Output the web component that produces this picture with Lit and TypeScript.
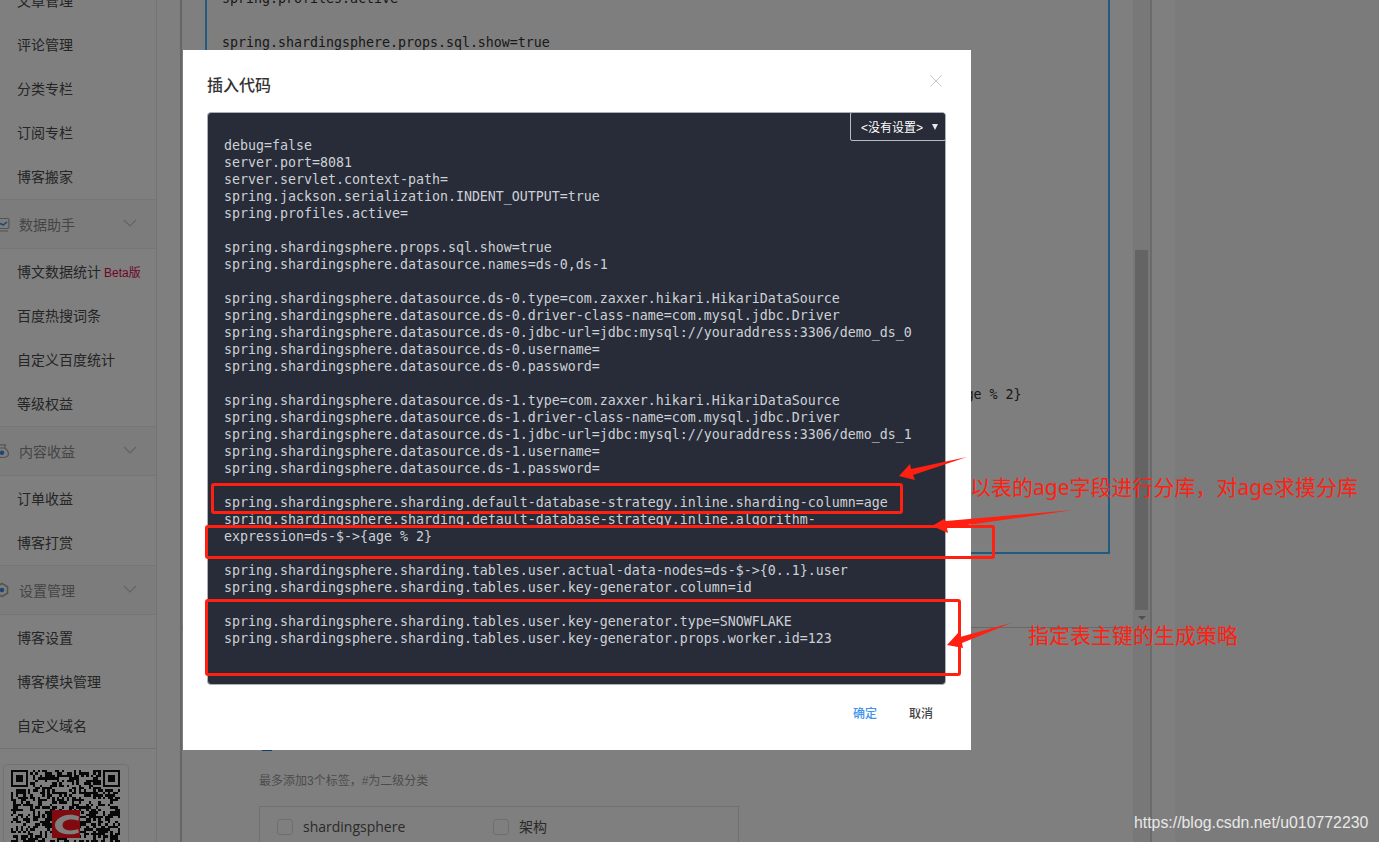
import { LitElement, html, css, svg } from "lit";
import { customElement } from "lit/decorators.js";

const CODE = `debug=false
server.port=8081
server.servlet.context-path=
spring.jackson.serialization.INDENT_OUTPUT=true
spring.profiles.active=

spring.shardingsphere.props.sql.show=true
spring.shardingsphere.datasource.names=ds-0,ds-1

spring.shardingsphere.datasource.ds-0.type=com.zaxxer.hikari.HikariDataSource
spring.shardingsphere.datasource.ds-0.driver-class-name=com.mysql.jdbc.Driver
spring.shardingsphere.datasource.ds-0.jdbc-url=jdbc:mysql://youraddress:3306/demo_ds_0
spring.shardingsphere.datasource.ds-0.username=
spring.shardingsphere.datasource.ds-0.password=

spring.shardingsphere.datasource.ds-1.type=com.zaxxer.hikari.HikariDataSource
spring.shardingsphere.datasource.ds-1.driver-class-name=com.mysql.jdbc.Driver
spring.shardingsphere.datasource.ds-1.jdbc-url=jdbc:mysql://youraddress:3306/demo_ds_1
spring.shardingsphere.datasource.ds-1.username=
spring.shardingsphere.datasource.ds-1.password=

spring.shardingsphere.sharding.default-database-strategy.inline.sharding-column=age
spring.shardingsphere.sharding.default-database-strategy.inline.algorithm-
expression=ds-$->{age % 2}

spring.shardingsphere.sharding.tables.user.actual-data-nodes=ds-$->{0..1}.user
spring.shardingsphere.sharding.tables.user.key-generator.column=id

spring.shardingsphere.sharding.tables.user.key-generator.type=SNOWFLAKE
spring.shardingsphere.sharding.tables.user.key-generator.props.worker.id=123`;

const BG_CODE = `spring.profiles.active

spring.shardingsphere.props.sql.show=true
spring.shardingsphere.datasource.names=ds-0,ds-1

spring.shardingsphere.datasource.ds-0.type=com.zaxxer.hikari.HikariDataSource
spring.shardingsphere.datasource.ds-0.driver-class-name=com.mysql.jdbc.Driver
spring.shardingsphere.datasource.ds-0.jdbc-url=jdbc:mysql://youraddress:3306/demo_ds_0
spring.shardingsphere.datasource.ds-0.username=
spring.shardingsphere.datasource.ds-0.password=

spring.shardingsphere.datasource.ds-1.type=com.zaxxer.hikari.HikariDataSource
spring.shardingsphere.datasource.ds-1.driver-class-name=com.mysql.jdbc.Driver
spring.shardingsphere.datasource.ds-1.jdbc-url=jdbc:mysql://youraddress:3306/demo_ds_1
spring.shardingsphere.datasource.ds-1.username=
spring.shardingsphere.datasource.ds-1.password=

spring.shardingsphere.sharding.default-database-strategy.inline.sharding-column=age
spring.shardingsphere.sharding.default-database-strategy.inline.algorithm-expression=ds-$->{age % 2}`;

function qrCells() {
  const n = 45;
  let seed = 20190612;
  const rnd = () => {
    seed = (seed * 1103515245 + 12345) & 0x7fffffff;
    return (seed >> 12) % 100;
  };
  const out: any[] = [];
  const inFinder = (x: number, y: number) =>
    (x < 8 && y < 8) || (x >= n - 8 && y < 8) || (x < 8 && y >= n - 8);
  for (let y = 0; y < n; y++) {
    for (let x = 0; x < n; x++) {
      if (inFinder(x, y)) continue;
      if (rnd() < 50) out.push(svg`<rect x=${x} y=${y} width="1" height="1"></rect>`);
    }
  }
  const finder = (x: number, y: number) => svg`
    <rect x=${x} y=${y} width="7" height="7"></rect>
    <rect x=${x + 1} y=${y + 1} width="5" height="5" fill="#fff"></rect>
    <rect x=${x + 2} y=${y + 2} width="3" height="3"></rect>`;
  out.push(finder(0, 0), finder(n - 7, 0), finder(0, n - 7));
  return out;
}

@customElement("app-root")
export class AppRoot extends LitElement {
  static styles = css`
    :host { display: block; width: 1379px; height: 842px; position: relative; overflow: hidden;
      background: #f6f6f6; font-family: "Liberation Sans", "Noto Sans CJK SC", sans-serif; }
    .page { display: flex; height: 842px; overflow: hidden; }

    .sidebar { width: 156px; flex: none; background: #fff; border-right: 1px solid #e8e8e8; margin-top: -21px; height: 863px; overflow: hidden; }
    .row { height: 44px; box-sizing: border-box; padding: 0 0 2px 17px; display: flex; align-items: center; font-size: 14px; color: #4a4a4a; white-space: nowrap; }
    .beta { font-size: 12px; color: #d80c4c; margin-left: 3px; }
    .sec { height: 48px; margin-bottom: 1px; display: flex; align-items: center; background: #f8f8f8;
      border-top: 1px solid #ececec; border-bottom: 1px solid #ececec; font-size: 14px; color: #8a8a8a; position: relative; padding-left: 19px; }
    .sec .ico { position: absolute; left: -6px; top: 16px; }
    .sec .chev { position: absolute; left: 123px; top: 19px; }
    .foot { border-top: 1px solid #e4e4e4; padding: 15px 0 0 3px; }
    .qrcard { width: 126px; height: 140px; border: 1px solid #e4e4e4; border-radius: 4px; padding: 5px 7px; box-sizing: border-box; background: #fff; position: relative; }
    .qrcard svg { display: block; }
    .qrlogo { position: absolute; left: 48px; top: 45px; }

    .gutter { width: 23px; flex: none; background: #fff; border-right: 2px solid #cdcdcd; }
    .content { width: 951px; flex: none; background: #fff; position: relative; overflow: hidden; }
    .editor { width: 905px; box-sizing: border-box; height: 554px; margin-left: 23px; border: 2px solid #46b4ff; border-top: 0; background: #fff; padding-right: 8px; }
    .editor-inner { height: 545px; background: #fcfcfc; overflow: visible; }
    .bgcode { margin: 0; padding: 0 0 0 15px; font: 13.29px/22px "DejaVu Sans Mono", monospace; color: #333; white-space: pre; transform: translateY(-12px); }
    .rule { height: 1px; background: #d0d0d0; margin-top: 73px; }
    .blue { width: 10px; height: 4px; background: #1a78d0; margin: 119px 0 0 80px; }
    .tip { font-size: 12px; line-height: 16px; color: #999; margin: 22px 0 0 77px; }
    .tags { width: 480px; height: 60px; box-sizing: border-box; margin: 17px 0 0 77px; border: 1px solid #e3e3e3; display: flex; align-items: flex-start; padding: 12px 0 0 17px; font-size: 14px; color: #555; font-family: "Open Sans", "Noto Sans CJK SC", sans-serif; }
    .tag { display: flex; align-items: center; gap: 10px; width: 216px; line-height: 16px; }
    .box { width: 14px; height: 14px; border: 1px solid #ddd; border-radius: 3px; flex: none; }

    .bar { flex: none; background: #f1f1f1; border-right: 2px solid #d4d4d4; padding: 0 2px; width: 13px; }
    .thumb { margin-top: 250px; height: 360px; background: #c8c8c8; width: 13px; }
    .arrow { margin: 6px 0 0 3px; width: 0; height: 0; border: 4px solid transparent; border-top: 4px solid #a0a0a0; border-bottom: 0; }
    .pad { width: 23px; flex: none; background: #fff; }

    .overlay { position: absolute; inset: 0; background: rgba(0, 0, 0, 0.5); }

    .modal { position: absolute; left: 183px; top: 50px; width: 788px; height: 700px; background: #fff; box-sizing: border-box; padding: 25px 25px 0 24px; display: flex; flex-direction: column; }
    .title { font-size: 16px; font-weight: 500; line-height: 22px; color: #333; }
    .close { position: absolute; left: 746px; top: 24px; }
    .codebox { margin-top: 15px; height: 573px; width: 739px; box-sizing: border-box; background: #282c38; border-radius: 4px; border: 1px solid #aab0b8; position: relative; overflow: hidden; }
    .code { margin: 0; padding: 24px 0 0 16px; font: 13.29px/17px "DejaVu Sans Mono", monospace; color: #cdd0d6; white-space: pre; }
    .select { position: absolute; right: -1px; top: -1px; width: 96px; height: 29px; box-sizing: border-box; border: 1px solid #b6bbc0; border-radius: 2px; display: flex; align-items: center; padding-left: 10px; font-size: 12px; color: #fff; background: #282c38; }
    .caret { margin-left: 9px; width: 0; height: 0; border-left: 3px solid transparent; border-right: 3px solid transparent; border-top: 6px solid #e8e8e8; }
    .actions { display: flex; justify-content: flex-end; gap: 32px; margin-top: 20px; padding-right: 13px; font-size: 12px; font-weight: 500; line-height: 18px; }
    .ok { color: #3d94ea; }
    .cancel { color: #444; }

    .rb { position: absolute; border: 3px solid #ff2012; border-radius: 3px; box-sizing: border-box; }
    .rb1 { left: 211px; top: 483px; width: 692px; height: 31px; }
    .rb2 { left: 205px; top: 525px; width: 790px; height: 34px; }
    .rb3 { left: 205px; top: 599px; width: 756px; height: 77px; }
    .arrows { position: absolute; left: 0; top: 0; }
    .note { position: absolute; color: #ff2012; font-size: 21px; line-height: 28px; white-space: nowrap; font-family: "Noto Sans", "Noto Sans CJK SC", sans-serif; font-weight: 400; }
    .n1 { left: 970px; top: 473px; }
    .n2 { left: 1028px; top: 621px; }
    .mark { position: absolute; left: 1134px; top: 813px; font-size: 15.85px; line-height: 20px; color: #e8e8e8; white-space: nowrap; }
  `;

  private sideRow(t: string) {
    return html`<div class="row">${t}</div>`;
  }

  render() {
    return html`
      <div class="page">
        <nav class="sidebar">
          ${["文章管理", "评论管理", "分类专栏", "订阅专栏", "博客搬家"].map((t) => this.sideRow(t))}
          <div class="sec">
            <svg class="ico" width="16" height="17" viewBox="0 0 16 17" fill="none" stroke="#a8a8a8" stroke-width="1.2"><rect x="1" y="2.500" width="14" height="10" rx="1.5"></rect><path d="M4 9.500l3-2 2 1.500 4-3" stroke="#3f88e0" stroke-width="1.4"></path><path d="M2 15h12" stroke="#b0b0b0"></path></svg>
            数据助手
            <svg class="chev" width="14" height="8" viewBox="0 0 14 8" fill="none" stroke="#c4c4c4" stroke-width="1.2"><path d="M1 1l6 6 6-6"></path></svg>
          </div>
          <div class="row">博文数据统计<span class="beta">Beta版</span></div>
          ${["百度热搜词条", "自定义百度统计", "等级权益"].map((t) => this.sideRow(t))}
          <div class="sec">
            <svg class="ico" width="16" height="16" viewBox="0 0 16 16" fill="none" stroke="#a8a8a8" stroke-width="1.2"><path d="M5.500 5L4.500 1.800h7L10.500 5"></path><path d="M5.500 5C3 6.500 1.500 9 1.500 11c0 2.500 2 3.500 6.500 3.500s6.500-1 6.500-3.500c0-2-1.500-4.500-4-6z"></path><circle cx="8" cy="9.800" r="2.200" fill="#3f88e0" stroke="none"></circle></svg>
            内容收益
            <svg class="chev" width="14" height="8" viewBox="0 0 14 8" fill="none" stroke="#c4c4c4" stroke-width="1.2"><path d="M1 1l6 6 6-6"></path></svg>
          </div>
          ${["订单收益", "博客打赏"].map((t) => this.sideRow(t))}
          <div class="sec">
            <svg class="ico" width="16" height="16" viewBox="0 0 16 16" fill="none" stroke="#a8a8a8" stroke-width="1.6"><path d="M8 1.500l5.500 3.200v6.600L8 14.500l-5.500-3.200V4.700z"></path><circle cx="8" cy="8" r="2.200" fill="#3f88e0" stroke="none"></circle></svg>
            设置管理
            <svg class="chev" width="14" height="8" viewBox="0 0 14 8" fill="none" stroke="#c4c4c4" stroke-width="1.2"><path d="M1 1l6 6 6-6"></path></svg>
          </div>
          ${["博客设置", "博客模块管理", "自定义域名"].map((t) => this.sideRow(t))}
          <div class="foot">
            <div class="qrcard">
              <svg width="109" height="109" viewBox="0 0 45 45" fill="#111" shape-rendering="crispEdges">${qrCells()}</svg>
              <svg class="qrlogo" width="28" height="28" viewBox="0 0 28 28"><rect width="28" height="28" fill="#ff1420"></rect><path d="M27 6.500C22 4.500 16 4 11 6 5.500 8.500 3 11.500 3 15c0 4.500 4 8 10 9 5 .7 10 .3 14-1.500l-1-3.500c-4 1.500-8 1.800-11 1-3-.8-4.500-2.300-4.500-5 0-2.500 2-4.200 5-5 3.500-.8 7-.5 11 .8z" fill="#fff"></path></svg>
            </div>
          </div>
        </nav>
        <div class="gutter"></div>
        <main class="content">
          <div class="editor">
            <div class="editor-inner"><pre class="bgcode">${BG_CODE}</pre></div>
          </div>
          <div class="rule"></div>
          <div class="blue"></div>
          <div class="tip">最多添加3个标签，#为二级分类</div>
          <div class="tags">
            <div class="tag"><span class="box"></span>shardingsphere</div>
            <div class="tag"><span class="box"></span>架构</div>
          </div>
        </main>
        <div class="bar"><div class="thumb"></div><div class="arrow"></div></div>
        <div class="pad"></div>
      </div>
      <div class="overlay"></div>
      <section class="modal">
        <div class="title">插入代码</div>
        <svg class="close" width="14" height="14" viewBox="0 0 14 14" stroke="#c8c8c8" stroke-width="1"><path d="M1.500 1.500l11 11M12.500 1.500l-11 11"></path></svg>
        <div class="codebox">
          <pre class="code">${CODE}</pre>
          <div class="select">&lt;没有设置&gt;<span class="caret"></span></div>
        </div>
        <div class="actions"><span class="ok">确定</span><span class="cancel">取消</span></div>
      </section>
      <div class="rb rb1"></div>
      <div class="rb rb2"></div>
      <div class="rb rb3"></div>
      <svg class="arrows" width="1379" height="842" fill="#ff2012">
        <polygon points="899,476 910,464 911,469 967,457 913,475 915,480"></polygon>
        <polygon points="932,526 944,519 946,521 1073,510 947,528 948,533"></polygon>
        <polygon points="947,645 958,633 960,637 1011,623 962,643 963,648"></polygon>
      </svg>
      <div class="note n1">以表的age字段进行分库，对age求摸分库</div>
      <div class="note n2">指定表主键的生成策略</div>
      <div class="mark">https://blog.csdn.net/u010772230</div>
    `;
  }
}
